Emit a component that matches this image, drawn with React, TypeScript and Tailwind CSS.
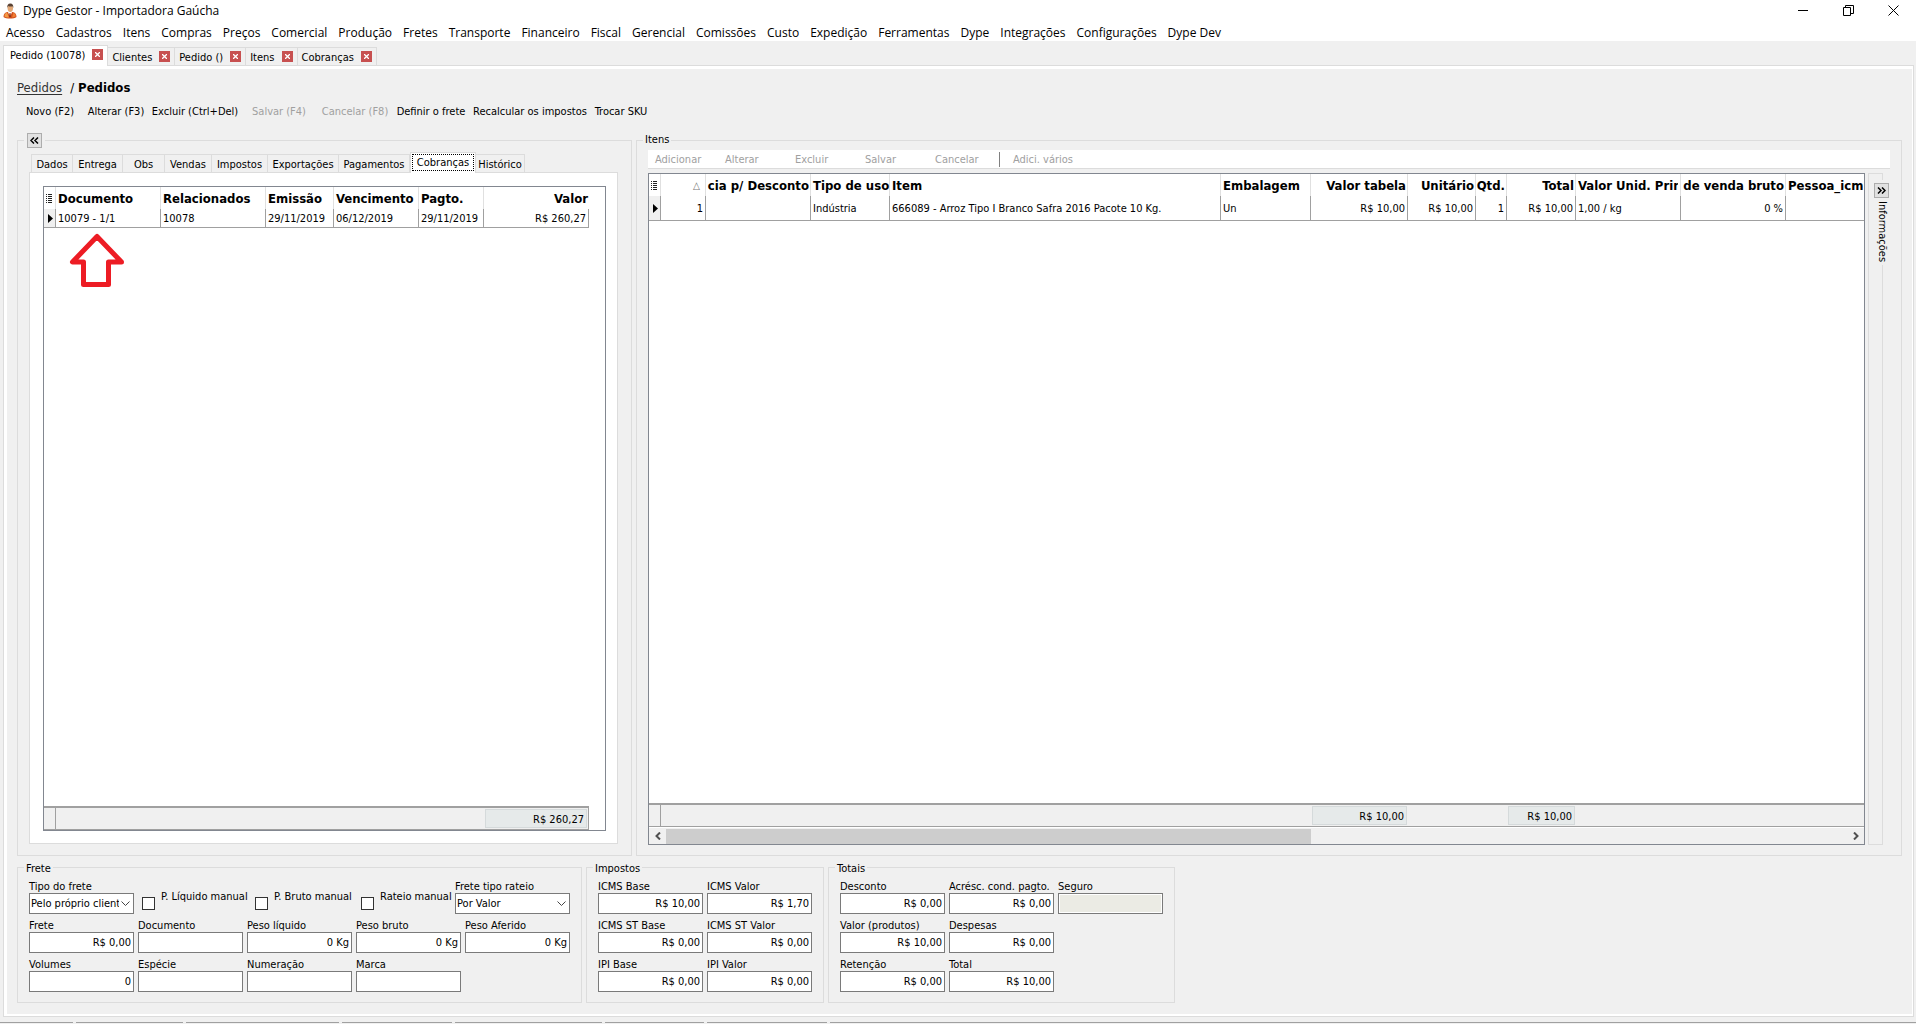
import { useId, useState } from 'react';
import clsx from 'clsx';

const MENU = [
  'Acesso', 'Cadastros', 'Itens', 'Compras', 'Preços', 'Comercial', 'Produção', 'Fretes', 'Transporte',
  'Financeiro', 'Fiscal', 'Gerencial', 'Comissões', 'Custo', 'Expedição', 'Ferramentas', 'Dype',
  'Integrações', 'Configurações', 'Dype Dev',
];

const WINDOW_TABS = ['Pedido (10078)', 'Clientes', 'Pedido ()', 'Itens', 'Cobranças'];

const ACTIONS = [
  { label: 'Novo (F2)', width: 'w-[66px]' },
  { label: 'Alterar (F3)', width: 'w-[66px]' },
  { label: 'Excluir (Ctrl+Del)', width: 'w-[92px]' },
  { label: 'Salvar (F4)', width: 'w-[76px]', disabled: true },
  { label: 'Cancelar (F8)', width: 'w-[76px]', disabled: true },
  { label: 'Definir o frete', width: 'w-[76px]' },
  { label: 'Recalcular os impostos', width: 'w-[122px]' },
  { label: 'Trocar SKU', width: 'w-[60px]' },
];

const DETAIL_TABS = [
  { label: 'Dados', width: 'w-[42px]' },
  { label: 'Entrega', width: 'w-[50px]' },
  { label: 'Obs', width: 'w-[42px]' },
  { label: 'Vendas', width: 'w-[47px]' },
  { label: 'Impostos', width: 'w-[56px]' },
  { label: 'Exportações', width: 'w-[71px]' },
  { label: 'Pagamentos', width: 'w-[71px]' },
  { label: 'Cobranças', width: 'w-[66px]' },
  { label: 'Histórico', width: 'w-[49px]' },
];

const ITEM_ACTIONS = ['Adicionar', 'Alterar', 'Excluir', 'Salvar', 'Cancelar'];

type Column = { title: string; value: string; width: string; right?: boolean; clip?: boolean };

const BILLING: Column[] = [
  { title: 'Documento', value: '10079 - 1/1', width: 'w-[105px]' },
  { title: 'Relacionados', value: '10078', width: 'w-[105px]' },
  { title: 'Emissão', value: '29/11/2019', width: 'w-[68px]' },
  { title: 'Vencimento', value: '06/12/2019', width: 'w-[85px]' },
  { title: 'Pagto.', value: '29/11/2019', width: 'w-[65px]' },
  { title: 'Valor', value: 'R$ 260,27', width: 'w-[105px]', right: true },
];

const ITEMS: Column[] = [
  { title: '△', value: '1', width: 'w-[45px]', right: true },
  { title: 'cia p/ Desconto', value: '', width: 'w-[105px]', right: true, clip: true },
  { title: 'Tipo de uso', value: 'Indústria', width: 'w-[79px]' },
  { title: 'Item', value: '666089 - Arroz Tipo I Branco Safra 2016 Pacote 10 Kg.', width: 'w-[331px]' },
  { title: 'Embalagem', value: 'Un', width: 'w-[90px]' },
  { title: 'Valor tabela', value: 'R$ 10,00', width: 'w-[97px]', right: true },
  { title: 'Unitário', value: 'R$ 10,00', width: 'w-[68px]', right: true },
  { title: 'Qtd.', value: '1', width: 'w-[31px]', right: true },
  { title: 'Total', value: 'R$ 10,00', width: 'w-[69px]', right: true },
  { title: 'Valor Unid. Prin', value: '1,00 / kg', width: 'w-[105px]', clip: true },
  { title: 'de venda bruto', value: '0 %', width: 'w-[105px]', right: true },
  { title: 'Pessoa_icm', value: '', width: 'w-auto' },
];

const STATUS_PANELS = ['w-[73px]', 'w-[107px]', 'w-[153px]', 'w-[110px]', 'w-[147px]', 'w-[99px]', 'w-[120px]', 'flex-1'];

function AppIcon() {
  return (
    <svg width="16" height="16" viewBox="0 0 16 16" aria-hidden="true">
      <path d="M1.500 14c0-3 1.500-4.500 4-5h5c2.500.5 4 2 4 5-2.500 2-10.500 2-13 0z" fill="#d4501c" />
      <path d="M2.500 13.500c0-2 .8-3.500 2.500-4l2 5c-2 0-3.500-.2-4.500-1z" fill="#f39a45" />
      <path d="M11.500 9.700c1.500.6 2.200 2 2.200 3.600-1 .8-2.200 1-3.700 1.200z" fill="#ee7f35" />
      <path d="M6 9l2 5 2-5-2-1z" fill="#fff" />
      <path d="M7.500 10h1l.5 3.500-1 1-1-1z" fill="#8c2f12" />
      <ellipse cx="8.300" cy="5.300" rx="2.700" ry="3.600" fill="#e2a877" />
      <path d="M5.300 5C5 2.200 6 .5 8.300.5s3.300 1.500 3 4.500l-.8-1.700c-1.300.4-3.100.4-4.300-.3z" fill="#5a4334" />
    </svg>
  );
}

function Chevrons({ left }: { left?: boolean }) {
  return (
    <svg width="9" height="7" viewBox="0 0 9 7" fill="none" stroke="#000" strokeWidth="1.500" aria-hidden="true">
      {left ? <path d="M4 .5l-3 3 3 3M8 .5l-3 3 3 3" /> : <path d="M1 .5l3 3-3 3M5 .5l3 3-3 3" />}
    </svg>
  );
}

function GridMenuIcon() {
  return (
    <svg width="7" height="9" viewBox="0 0 7 9" className="mx-auto" aria-hidden="true">
      <path d="M0 .5h1M2 .5h4M0 2.500h1M2 2.500h4M0 4.500h1M2 4.500h4M0 6.500h1M2 6.500h4M0 8.500h1M2 8.500h4" stroke="#222" />
    </svg>
  );
}

function DataGrid({ columns, tall }: { columns: Column[]; tall?: boolean }) {
  return (
    <table className={clsx('table-fixed border-separate border-spacing-0', tall ? 'w-full' : 'w-[545px]')}>
      <thead>
        <tr className="h-[22px] text-[13px] font-bold">
          <th className="w-3 border-r border-[#e0e0e0] p-0">
            <GridMenuIcon />
          </th>
          {columns.map((col) => (
            <th
              key={col.title}
              className={clsx(
                'border-r border-[#e0e0e0] pt-[2px] pb-0 last:border-r-0',
                col.width,
                col.right ? 'pr-px pl-0' : col.clip ? 'px-[2px]' : 'pr-0 pl-[2px]'
              )}
            >
              <div className={clsx('flex whitespace-nowrap', col.right && 'justify-end', col.clip && 'overflow-hidden')}>
                <span className={clsx(col.title === '△' && 'pr-1 text-[10px] font-normal text-[#777]')}>{col.title}</span>
              </div>
            </th>
          ))}
        </tr>
      </thead>
      <tbody>
        <tr className={tall ? 'h-[25px]' : 'h-[19px]'}>
          <td className="border-r border-b border-[#a0a0a0] bg-[#f0f0f0] p-0">
            <svg width="5" height="9" viewBox="0 0 5 9" className="ml-1" aria-hidden="true">
              <path d="M0 0l5 4.500L0 9z" />
            </svg>
          </td>
          {columns.map((col) => (
            <td
              key={col.title}
              className={clsx(
                'overflow-hidden border-r border-b border-[#a0a0a0] pt-[2px] pr-[2px] pb-0 pl-[2px] whitespace-nowrap',
                tall && 'last:border-r-0',
                col.right && 'text-right'
              )}
            >
              {col.value}
            </td>
          ))}
        </tr>
      </tbody>
    </table>
  );
}

function Field({ label, value = '', disabled }: { label: string; value?: string; disabled?: boolean }) {
  const id = useId();
  const [text, setText] = useState(value);

  return (
    <div className="w-[105px]">
      <label htmlFor={id} className="block h-4 leading-5 whitespace-nowrap">
        {label}
      </label>
      <input
        id={id}
        value={text}
        onChange={(e) => setText(e.target.value)}
        disabled={disabled}
        className="block h-[21px] w-full border border-[#7a7a7a] bg-white px-[2px] text-right disabled:bg-[#ebebe4] disabled:outline-1 disabled:-outline-offset-2 disabled:outline-white"
      />
    </div>
  );
}

function SelectField({ label, option, width }: { label: string; option: string; width: string }) {
  const id = useId();

  return (
    <div className={width}>
      <label htmlFor={id} className="block h-4 leading-5 whitespace-nowrap">
        {label}
      </label>
      <div className="relative">
        <select id={id} className="block h-[21px] w-full appearance-none border border-[#7a7a7a] bg-white pr-[14px] pl-px">
          <option>{option}</option>
        </select>
        <svg width="9" height="6" viewBox="0 0 9 6" className="pointer-events-none absolute top-2 right-1" fill="none" stroke="#444" aria-hidden="true">
          <path d="M.5.5l4 4 4-4" />
        </svg>
      </div>
    </div>
  );
}

function CheckField({ label, width }: { label: string; width: string }) {
  return (
    <label className={clsx('flex items-start gap-[6px] pt-[13px] whitespace-nowrap', width)}>
      <input type="checkbox" className="mt-[7px] size-[13px] shrink-0 appearance-none border border-[#333] bg-white checked:bg-[#333]" />
      <span className="leading-[14px]">{label}</span>
    </label>
  );
}

function Group({ title, children }: { title: string; children: React.ReactNode }) {
  return (
    <fieldset className="min-w-0 border border-[#dcdcdc] px-[11px] pb-[10px]">
      <legend className="-ml-[5px] h-[15px] px-[2px] leading-[17px]">{title}</legend>
      <div className="flex flex-col gap-[2px] pt-[2px]">{children}</div>
    </fieldset>
  );
}

export default function App() {
  const [activeTab, setActiveTab] = useState('Cobranças');

  return (
    <div className="flex h-screen flex-col overflow-hidden bg-[#f0f0f0] font-['DejaVu_Sans_Condensed','DejaVu_Sans',sans-serif] text-[11px] leading-[14px] text-black">
      <header className="bg-white font-['Open_Sans',sans-serif] text-[12px]">
        <div className="flex h-6 items-start">
          <div className="flex flex-1 items-center gap-[5px] pt-[3px] pl-[2px]">
            <AppIcon />
            <h1>Dype Gestor - Importadora Gaúcha</h1>
          </div>
          <div className="flex pt-[5px]">
            <button type="button" aria-label="Minimizar" className="flex w-[45px] justify-center">
              <svg width="11" height="11" viewBox="0 0 11 11" stroke="#000"><path d="M0 5.500h10" /></svg>
            </button>
            <button type="button" aria-label="Restaurar" className="flex w-[45px] justify-center">
              <svg width="11" height="11" viewBox="0 0 11 11" fill="none" stroke="#000"><path d="M.5 2.500h7v8h-7zM2.500 2.500v-2h8v8h-2.500" /></svg>
            </button>
            <button type="button" aria-label="Fechar" className="flex w-[45px] justify-center">
              <svg width="11" height="11" viewBox="0 0 11 11" stroke="#000"><path d="M.5.5l10 10M10.500.5l-10 10" /></svg>
            </button>
          </div>
        </div>
        <nav className="flex h-[17px] items-center gap-[11px] pl-[6px]">
          {MENU.map((item) => (
            <button key={item} type="button" className="whitespace-nowrap">
              {item}
            </button>
          ))}
        </nav>
      </header>

      <div className="flex h-6 items-end pl-[3px]">
        {WINDOW_TABS.map((tab, i) => (
          <div
            key={tab}
            className={clsx(
              'flex items-center gap-[7px] border-t border-r border-[#dcdcdc]',
              i === 0 ? 'relative z-10 -mb-px h-[21px] border-l bg-white pr-1 pb-[3px] pl-[6px]' : 'h-[18px] pr-1 pl-1'
            )}
          >
            <button type="button" className="pt-[2px] whitespace-nowrap">{tab}</button>
            <button type="button" aria-label={`Fechar ${tab}`} className="flex size-[11px] items-center justify-center bg-[#c75050]">
              <svg width="5" height="5" viewBox="0 0 5 5" stroke="#fff" strokeWidth="1.300"><path d="M0 0l5 5M5 0L0 5" /></svg>
            </button>
          </div>
        ))}
      </div>

      <main className="mr-[2px] mb-[5px] ml-[3px] flex min-h-0 flex-1 flex-col border border-[#dcdcdc] bg-white pt-[3px] pr-px pb-[2px] pl-[3px]">
        <div className="flex min-h-0 flex-1 flex-col bg-[#f0f0f0] pt-[10px] pr-[10px] pb-[11px] pl-[10px]">
          <div className="flex h-[18px] items-center gap-1 text-[13px]">
            <a href="#pedidos" className="pr-1 text-[#333] underline underline-offset-2">Pedidos</a>
            <span>/</span>
            <h2 className="font-bold">Pedidos</h2>
          </div>
          <div className="flex h-7 items-center pt-[2px]">
            {ACTIONS.map((action) => (
              <button
                key={action.label}
                type="button"
                disabled={action.disabled}
                className={clsx('shrink-0 text-center whitespace-nowrap disabled:text-[#a0a0a0]', action.width)}
              >
                {action.label}
              </button>
            ))}
          </div>

          <div className="mt-2 flex min-h-0 flex-1 gap-1">
            <fieldset className="flex w-[615px] min-w-0 shrink-0 flex-col border border-[#dcdcdc] pt-1 pr-[13px] pb-[11px] pl-[11px]">
              <legend className="-ml-[5px] px-[3px]">
                <button type="button" aria-label="Recolher" className="flex size-[15px] items-center justify-center border border-[#adadad] bg-[#e1e1e1]">
                  <Chevrons left />
                </button>
              </legend>
              <div role="tablist" className="flex h-5 items-end pl-[2px]">
                {DETAIL_TABS.map((tab) => (
                  <button
                    key={tab.label}
                    type="button"
                    role="tab"
                    aria-selected={tab.label === activeTab}
                    onClick={() => setActiveTab(tab.label)}
                    className={clsx(
                      'shrink-0 border-t border-r border-[#dcdcdc] text-center whitespace-nowrap first:border-l',
                      tab.width,
                      tab.label === activeTab
                        ? 'relative z-10 -mb-px h-[21px] border-l bg-white pb-px outline-1 -outline-offset-3 outline-dotted'
                        : 'h-[18px] pt-[2px]'
                    )}
                  >
                    {tab.label}
                  </button>
                ))}
              </div>
              <div className="flex min-h-0 flex-1 border border-[#dcdcdc] bg-white pt-[13px] pr-[11px] pb-3 pl-[13px]">
                <div className="relative flex flex-1 flex-col border border-[#828790] bg-white">
                  <DataGrid columns={BILLING} />
                  <svg width="56" height="54" viewBox="0 0 56 54" className="absolute top-[46px] left-[25px]" fill="none" stroke="#ed1c24" strokeWidth="5" strokeLinejoin="round" aria-hidden="true">
                    <path d="M28 3.500L3.500 29h11v22.500h25V29h13z" />
                  </svg>
                  <div className="mt-auto flex h-6 w-[545px] border-t-2 border-r border-b border-[#a0a0a0] bg-[#f0f0f0]">
                    <div className="w-3 border-r border-[#a0a0a0]" />
                    <output className="my-px mr-px ml-auto w-[102px] border border-[#d5dadb] bg-[#e6eaea] pr-[2px] text-right leading-[19px]">
                      R$ 260,27
                    </output>
                  </div>
                </div>
              </div>
            </fieldset>

            <fieldset className="flex min-w-0 flex-1 flex-col border border-[#dcdcdc] px-[11px] pt-[2px] pb-[10px]">
              <legend className="-ml-[5px] h-[15px] px-[2px] leading-[14px]">Itens</legend>
              <div className="flex h-[19px] shrink-0 items-center border-b border-[#dcdcdc] bg-white pl-[7px]">
                {ITEM_ACTIONS.map((label) => (
                  <button key={label} type="button" disabled className="w-[70px] pt-[2px] text-left text-[#a0a0a0]">
                    {label}
                  </button>
                ))}
                <button type="button" disabled className="-ml-[6px] h-[15px] border-l border-[#808080] pt-px pl-[13px] text-[#a0a0a0]">
                  Adici. vários
                </button>
              </div>
              <div className="mt-1 flex min-h-0 flex-1 gap-[3px] pr-[7px]">
                <div className="flex min-w-0 flex-1 flex-col border border-[#828790] bg-white">
                  <DataGrid columns={ITEMS} tall />
                  <div className="mt-auto flex h-6 shrink-0 border-t-2 border-b border-[#a0a0a0] bg-[#f0f0f0]">
                    <div className="w-3 border-r border-[#a0a0a0]" />
                    <output className="my-px ml-[651px] w-[95px] border border-[#d5dadb] bg-[#e6eaea] pr-[2px] text-right leading-[19px]">
                      R$ 10,00
                    </output>
                    <output className="my-px ml-[101px] w-[67px] border border-[#d5dadb] bg-[#e6eaea] pr-[2px] text-right leading-[19px]">
                      R$ 10,00
                    </output>
                  </div>
                  <div className="flex h-[17px] shrink-0 items-center border-t border-white bg-[#f0f0f0]">
                    <button type="button" aria-label="Rolar para a esquerda" className="flex w-[17px] justify-center">
                      <svg width="6" height="8" viewBox="0 0 6 8" fill="none" stroke="#505050" strokeWidth="2"><path d="M5 .5L1.500 4 5 7.500" /></svg>
                    </button>
                    <div className="h-[15px] w-[645px] bg-[#cdcdcd]" />
                    <button type="button" aria-label="Rolar para a direita" className="ml-auto flex w-[17px] justify-center">
                      <svg width="6" height="8" viewBox="0 0 6 8" fill="none" stroke="#505050" strokeWidth="2"><path d="M1 .5L4.500 4 1 7.500" /></svg>
                    </button>
                  </div>
                </div>
                <aside className="relative w-[15px] border border-[#dcdcdc]">
                  <div className="absolute top-[6px] -right-[7px] flex flex-col items-center gap-[3px] bg-[#f0f0f0] py-[3px]">
                    <button type="button" aria-label="Expandir informações" className="flex size-[15px] items-center justify-center border border-[#adadad] bg-[#e1e1e1]">
                      <Chevrons />
                    </button>
                    <span className="w-[15px] [writing-mode:vertical-rl] leading-[14px]">Informações</span>
                  </div>
                </aside>
              </div>
            </fieldset>
          </div>

          <div className="mt-1 flex shrink-0 gap-1">
            <Group title="Frete">
              <div className="flex">
                <SelectField label="Tipo do frete" option="Pelo próprio client" width="w-[105px]" />
                <div className="flex pl-2">
                  <CheckField label="P. Líquido manual" width="w-[113px]" />
                  <CheckField label="P. Bruto manual" width="w-[106px]" />
                  <CheckField label="Rateio manual" width="w-[94px]" />
                </div>
                <SelectField label="Frete tipo rateio" option="Por Valor" width="w-[115px]" />
              </div>
              <div className="flex gap-1">
                <Field label="Frete" value="R$ 0,00" />
                <Field label="Documento" />
                <Field label="Peso líquido" value="0 Kg" />
                <Field label="Peso bruto" value="0 Kg" />
                <Field label="Peso Aferido" value="0 Kg" />
              </div>
              <div className="flex gap-1">
                <Field label="Volumes" value="0" />
                <Field label="Espécie" />
                <Field label="Numeração" />
                <Field label="Marca" />
              </div>
            </Group>
            <Group title="Impostos">
              <div className="grid grid-cols-[repeat(2,105px)] gap-x-1 gap-y-[2px]">
                <Field label="ICMS Base" value="R$ 10,00" />
                <Field label="ICMS Valor" value="R$ 1,70" />
                <Field label="ICMS ST Base" value="R$ 0,00" />
                <Field label="ICMS ST Valor" value="R$ 0,00" />
                <Field label="IPI Base" value="R$ 0,00" />
                <Field label="IPI Valor" value="R$ 0,00" />
              </div>
            </Group>
            <Group title="Totais">
              <div className="flex gap-1">
                <div className="grid grid-cols-[repeat(2,105px)] gap-x-1 gap-y-[2px]">
                  <Field label="Desconto" value="R$ 0,00" />
                  <Field label="Acrésc. cond. pagto." value="R$ 0,00" />
                  <Field label="Valor (produtos)" value="R$ 10,00" />
                  <Field label="Despesas" value="R$ 0,00" />
                  <Field label="Retenção" value="R$ 0,00" />
                  <Field label="Total" value="R$ 10,00" />
                </div>
                <Field label="Seguro" disabled />
              </div>
            </Group>
          </div>
        </div>
      </main>

      <footer className="flex h-[2px] gap-[3px]">
        {STATUS_PANELS.map((width) => (
          <div key={width} className={clsx('border-t border-[#a0a0a0]', width)} />
        ))}
      </footer>
    </div>
  );
}
